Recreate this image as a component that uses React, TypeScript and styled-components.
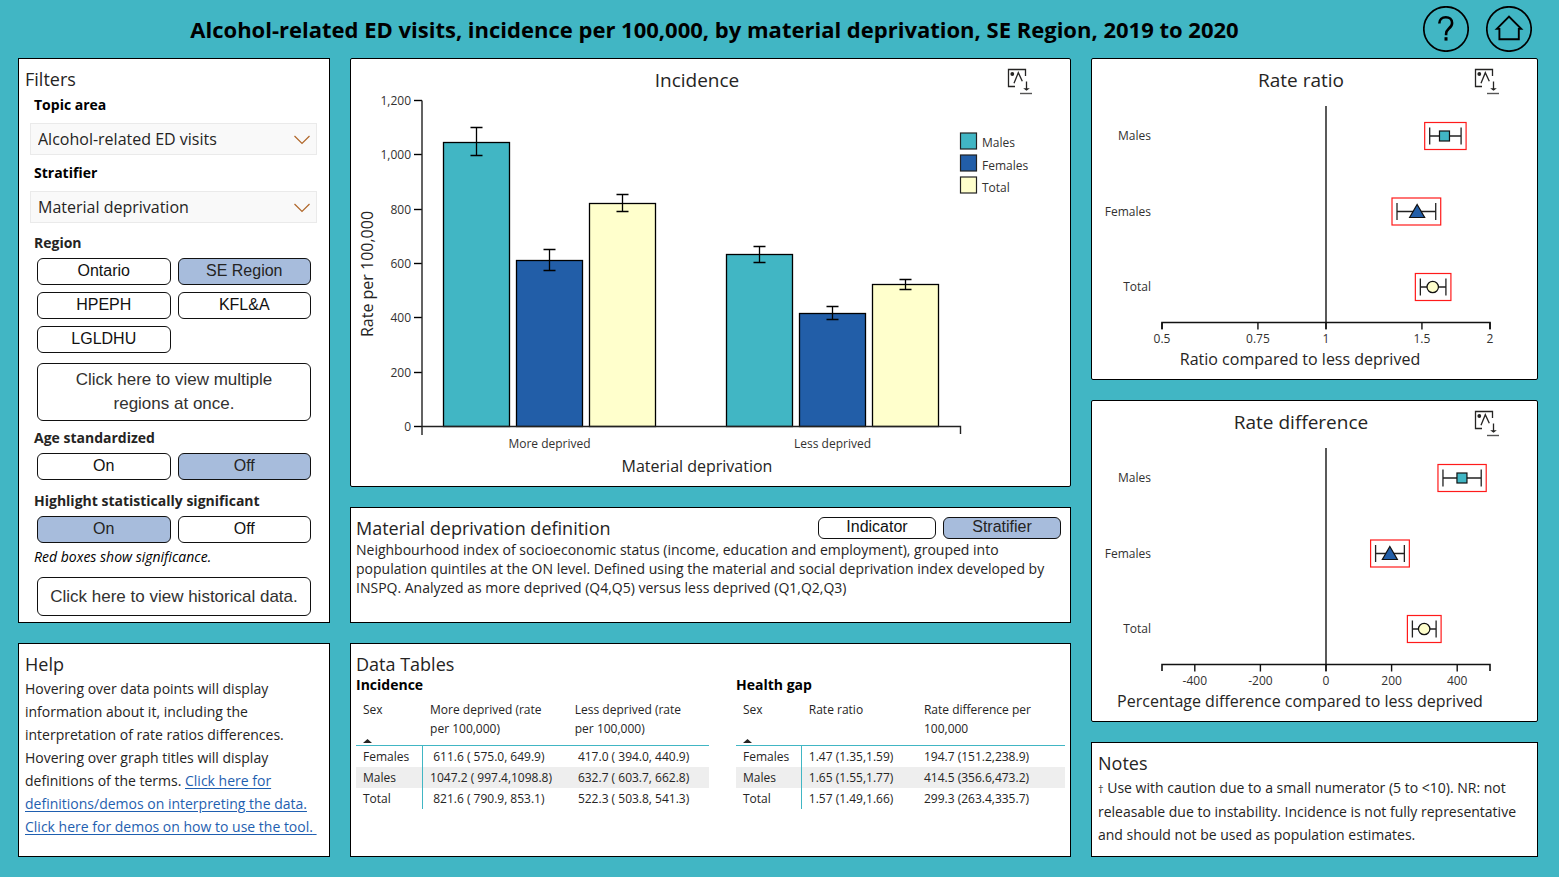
import React, { useState } from "react";
import styled, { createGlobalStyle } from "styled-components";

const TEAL = "#41b6c4";
const BLUE = "#225ea8";
const YELLOW = "#ffffcc";
const UI_FONT = '"Open Sans", "Noto Sans", sans-serif';
const BUTTON_FONT = '"Liberation Sans", Arial, sans-serif';

const GlobalStyle = createGlobalStyle`
  *, *::before, *::after { box-sizing: border-box; }
  body { margin: 0; background: ${TEAL}; color: #252423; font-family: ${UI_FONT}; font-size: 14px; }
  h1, h2, h3, p { margin: 0; }
  button, select { font: inherit; color: inherit; }
`;

/* ---------- page frame ---------- */

const Page = styled.div`
  display: flex;
  flex-direction: column;
  min-height: 100vh;
  padding: 0 21px 20px 18px;
`;

const Header = styled.header`
  display: flex;
  align-items: center;
  height: 58px;
  padding-right: 6px;
`;

const PageTitle = styled.h1`
  flex: 1;
  padding-right: 12px;
  text-align: center;
  font-size: 22px;
  font-weight: 700;
  line-height: 28px;
  color: #000;
`;

const HeaderNav = styled.nav`
  display: flex;
  gap: 17px;
`;

const RoundButton = styled.button`
  display: block;
  width: 46px;
  height: 46px;
  padding: 0;
  border: 0;
  border-radius: 50%;
  background: transparent;
  cursor: pointer;

  svg { display: block; }
`;

const Columns = styled.main`
  flex: 1;
  display: grid;
  grid-template-columns: minmax(0, 312fr) minmax(0, 721fr) minmax(0, 447fr);
  gap: 20px;
`;

const Column = styled.div`
  display: flex;
  flex-direction: column;
  gap: 20px;
`;

const Card = styled.section<{ $grow?: boolean; $rounded?: boolean }>`
  flex: ${(p) => (p.$grow ? "1 0 auto" : "0 0 auto")};
  background: #fff;
  border: 1px solid #000;
  border-radius: ${(p) => (p.$rounded ? "2px" : "0")};
`;

const TextCard = styled(Card)`
  padding: 8px 6px 6px;
`;

const CardTitle = styled.h2`
  font-size: 18px;
  font-weight: 400;
  line-height: 24px;
`;

const BodyText = styled.p<{ $tight?: boolean }>`
  font-size: 14px;
  line-height: ${(p) => (p.$tight ? "19px" : "23px")};
`;

const PaddedText = styled.div`
  padding-top: 1px;

  a { color: #1f5fb0; text-underline-offset: 2px; }
`;

const Dagger = styled.span`
  font-size: 11px;
`;

/* ---------- filters ---------- */

const FilterBody = styled.div`
  display: flex;
  flex-direction: column;
  padding: 4px 6px 0 5px;
`;

const FieldLabel = styled.label`
  display: block;
  margin-left: 4px;
  font-weight: 700;
  font-size: 14px;
  line-height: 20px;
  color: #000;
`;

const GroupLabel = styled.div`
  margin-left: 4px;
  font-weight: 700;
  font-size: 14px;
  line-height: 20px;
`;

const SelectWrap = styled.div`
  position: relative;
  margin: 8px 0;

  svg { position: absolute; right: 7px; top: 12px; pointer-events: none; }
`;

const Select = styled.select`
  display: block;
  width: 100%;
  height: 32px;
  padding: 0 30px 0 7px;
  appearance: none;
  background: #f9f9f9;
  border: 1px solid #eaeaea;
  border-radius: 0;
  font-size: 16px;
`;

const Group = styled.div<{ $top: number }>`
  margin-top: ${(p) => p.$top}px;
  padding-right: 6px;
`;

const ToggleGrid = styled.div`
  display: grid;
  grid-template-columns: 1fr 1fr;
  gap: 7px;
  margin: 5px 0 0 7px;
`;

const Toggle = styled.button<{ $on?: boolean; $small?: boolean }>`
  height: ${(p) => (p.$small ? 22 : 27)}px;
  padding: 0 4px 2px;
  border: 1px solid #111;
  border-radius: 6px;
  background: ${(p) => (p.$on ? "#a7bcdc" : "#fff")};
  color: ${(p) => (p.$on ? "#252423" : "#111")};
  font-family: ${BUTTON_FONT};
  font-size: 16px;
  line-height: 18px;
  cursor: pointer;
`;

const WideButton = styled.button`
  display: block;
  width: calc(100% - 7px);
  min-height: 39px;
  margin: 10px 0 0 7px;
  padding: 4px 10px;
  border: 1px solid #111;
  border-radius: 6px;
  background: #fff;
  color: #323130;
  font-family: ${BUTTON_FONT};
  font-size: 17px;
  line-height: 24px;
  cursor: pointer;
`;

const Hint = styled.p`
  margin: 4px 0 0 4px;
  font-style: italic;
  line-height: 20px;
  color: #000;
`;

/* ---------- definition ---------- */

const DefinitionCard = styled(Card)`
  min-height: 116px;
  padding: 8px 9px 6px 5px;
`;

const DefinitionHead = styled.div`
  display: flex;
  align-items: center;
  justify-content: space-between;
`;

const ToggleRow = styled.div`
  display: grid;
  grid-template-columns: 118px 118px;
  gap: 7px;
`;

/* ---------- tables ---------- */

const TableRow = styled.div`
  display: grid;
  grid-template-columns: minmax(0, 353fr) minmax(0, 329fr);
  gap: 27px;
`;

const TableCard = styled(Card)`
  padding: 8px 5px;
`;

const DataTable = styled.table`
  width: 100%;
  border-collapse: separate;
  border-spacing: 0;
  table-layout: fixed;
  font-size: 12px;

  caption {
    text-align: left;
    font-size: 14px;
    font-weight: 700;
    line-height: 18px;
    color: #000;
  }
  th { text-align: left; font-weight: 400; }
  thead th {
    padding: 6px 12px 2px 7px;
    vertical-align: top;
    line-height: 19px;
    border-bottom: 1px solid ${TEAL};
  }
  thead svg { display: block; margin-top: 20px; }
  tbody th, tbody td {
    height: 21px;
    padding: 0 0 0 7px;
    line-height: 20px;
    white-space: pre;
  }
  tbody th { border-right: 1px solid ${TEAL}; }
  tbody tr:nth-child(even) > * { background: #eeeeee; }
`;

/* ---------- charts ---------- */

const ChartHead = styled.div`
  display: flex;
  align-items: flex-start;
  padding: 8px 37px 0 36px;
`;

const ChartTitle = styled(CardTitle)`
  flex: 1;
  text-align: center;
  font-size: 19px;
  line-height: 26px;
`;

const IconButton = styled.button`
  width: 26px;
  height: 26px;
  padding: 0;
  border: 0;
  background: none;
  cursor: pointer;

  svg { display: block; }
`;

const Plot = styled.svg`
  display: block;
  width: 100%;
  height: auto;
  font-family: ${UI_FONT};

  .tick { font-size: 12px; fill: #323130; }
  .axis { font-size: 16px; fill: #252423; }
`;

function DownloadIcon() {
  return (
    <svg width="26" height="28" viewBox="0 0 26 28" fill="none" stroke="#252423" strokeWidth="1.3">
      <path d="M18.5 9V2.5H1.5V19.5H8" />
      <circle cx="5.3" cy="7" r="1.9" fill="#252423" stroke="none" />
      <path d="M7 16.3 11.3 5.7 15.3 14.3" />
      <path d="M19.5 14.5v8.5" />
      <path d="M16.2 21.2h6.6l-3.3 2.6z" fill="#252423" stroke="none" />
      <path d="M13 26.5h12" strokeWidth="1.4" stroke="#555" />
    </svg>
  );
}

function Chevron() {
  return (
    <svg width="16" height="10" viewBox="0 0 16 10" fill="none" stroke="#b0672a" strokeWidth="1.2">
      <path d="M.5 1 8 8.5 15.5 1" />
    </svg>
  );
}

type Sex = "Females" | "Males" | "Total";
const FILL: Record<Sex, string> = { Males: TEAL, Females: BLUE, Total: YELLOW };
const ORDER: Sex[] = ["Males", "Females", "Total"];

const INCIDENCE: { label: string; left: number; values: Record<Sex, [number, number, number]> }[] = [
  {
    label: "More deprived",
    left: 92.5,
    values: { Males: [1047.2, 997.4, 1098.8], Females: [611.6, 575, 649.9], Total: [821.6, 790.9, 853.1] },
  },
  {
    label: "Less deprived",
    left: 375.5,
    values: { Males: [632.7, 603.7, 662.8], Females: [417, 394, 440.9], Total: [522.3, 503.8, 541.3] },
  },
];

function ChartHeader({ title }: { title: string }) {
  return (
    <ChartHead>
      <ChartTitle>{title}</ChartTitle>
      <IconButton type="button" aria-label={`Download ${title} chart`}>
        <DownloadIcon />
      </IconButton>
    </ChartHead>
  );
}

function IncidenceChart() {
  const base = 333.5;
  const y = (v: number) => base - Math.round((v * 326) / 1200);
  const bar = 66;
  const step = 73;
  return (
    <Plot viewBox="0 0 719 393" role="img" aria-label="Incidence by material deprivation">
      {[0, 200, 400, 600, 800, 1000, 1200].map((t) => (
        <g key={t}>
          <path d={`M63 ${y(t)}H71`} stroke="#000" strokeWidth="1.4" />
          <text className="tick" x="60" y={y(t) + 4.5} textAnchor="end">
            {t.toLocaleString("en-US")}
          </text>
        </g>
      ))}
      {INCIDENCE.map((group) => (
        <g key={group.label}>
          {ORDER.map((sex, i) => {
            const [v, lo, hi] = group.values[sex];
            const x = group.left + i * step;
            const mid = x + bar / 2;
            return (
              <g key={sex} stroke="#000" strokeWidth="1.3">
                <rect x={x} y={y(v)} width={bar} height={base - y(v)} fill={FILL[sex]} />
                <path d={`M${mid} ${y(hi)}V${y(lo)}M${mid - 6} ${y(hi)}h12M${mid - 6} ${y(lo)}h12`} fill="none" />
              </g>
            );
          })}
          <text className="tick" x={group.left + step + bar / 2} y="355" textAnchor="middle">
            {group.label}
          </text>
        </g>
      ))}
      <path d={`M71 ${y(1200)}V342M71 ${base}H609.5V341`} fill="none" stroke="#222" strokeWidth="1.4" />
      <text className="axis" x="346" y="379" textAnchor="middle">
        Material deprivation
      </text>
      <text className="axis" transform="translate(22 181) rotate(-90)" textAnchor="middle">
        Rate per 100,000
      </text>
      {ORDER.map((sex, i) => (
        <g key={sex}>
          <rect x="609.5" y={40 + i * 22} width="16" height="16" fill={FILL[sex]} stroke="#222" strokeWidth="1.2" />
          <text className="tick" x="631" y={54 + i * 22.5}>
            {sex}
          </text>
        </g>
      ))}
    </Plot>
  );
}

function Marker({ sex, x, y }: { sex: Sex; x: number; y: number }) {
  const paint = { fill: FILL[sex], stroke: "#111", strokeWidth: 1.2 };
  if (sex === "Males") return <rect x={x - 5} y={y - 5} width="10" height="10" {...paint} />;
  if (sex === "Females") return <path d={`M${x} ${y - 7}L${x + 7.5} ${y + 6}H${x - 7.5}Z`} {...paint} />;
  return <circle cx={x} cy={y} r="5.7" {...paint} />;
}

interface ForestProps {
  label: string;
  highlight: boolean;
  scale: (v: number) => number;
  ticks: number[];
  reference: number;
  rows: Record<Sex, [number, number, number]>;
}

function ForestPlot({ label, highlight, scale, ticks, reference, rows }: ForestProps) {
  return (
    <Plot viewBox="0 0 445 286" role="img" aria-label={label}>
      <path d={`M${scale(reference)} 13V236`} stroke="#000" strokeWidth="1.3" />
      <path d="M70 236V229.5H398V236" fill="none" stroke="#111" strokeWidth="1.6" />
      {ticks.map((t) => (
        <g key={t}>
          <path d={`M${scale(t)} 229.5V236.5`} stroke="#111" strokeWidth="1.4" />
          <text className="tick" x={scale(t)} y="250" textAnchor="middle">
            {t}
          </text>
        </g>
      ))}
      {ORDER.map((sex, i) => {
        const [v, lo, hi] = rows[sex];
        const y = 43 + i * 75.5;
        const a = scale(lo);
        const b = scale(hi);
        return (
          <g key={sex}>
            <text className="tick" x="59" y={y + 4} textAnchor="end">
              {sex}
            </text>
            {highlight && (
              <rect x={a - 5} y={y - 13.5} width={b - a + 10} height="27" fill="none" stroke="#ff1a1a" strokeWidth="1.2" />
            )}
            <path d={`M${a} ${y}H${b}M${a} ${y - 8.5}v17M${b} ${y - 8.5}v17`} stroke="#222" strokeWidth="1.3" />
            <Marker sex={sex} x={scale(v)} y={y} />
          </g>
        );
      })}
      <text className="axis" x="208" y="272" textAnchor="middle">
        {label}
      </text>
    </Plot>
  );
}

interface TableProps {
  caption: string;
  widths: number[];
  heads: string[];
  rows: string[][];
}

function ResultTable({ caption, widths, heads, rows }: TableProps) {
  return (
    <DataTable>
      <caption>{caption}</caption>
      <colgroup>
        {widths.map((w, i) => (
          <col key={i} style={{ width: `${w}%` }} />
        ))}
      </colgroup>
      <thead>
        <tr>
          <th scope="col" aria-sort="ascending">
            Sex
            <svg width="9" height="4" viewBox="0 0 9 4" aria-hidden="true">
              <path d="M0 4 4.5 0 9 4Z" fill="#252423" />
            </svg>
          </th>
          {heads.map((h) => (
            <th scope="col" key={h}>
              {h}
            </th>
          ))}
        </tr>
      </thead>
      <tbody>
        {rows.map(([name, ...cells]) => (
          <tr key={name}>
            <th scope="row">{name}</th>
            {cells.map((c) => (
              <td key={c}>{c}</td>
            ))}
          </tr>
        ))}
      </tbody>
    </DataTable>
  );
}

interface ToggleSetProps {
  label: string;
  options: string[];
  value: string;
  onChange: (v: string) => void;
}

function ToggleSet({ label, options, value, onChange }: ToggleSetProps) {
  return (
    <ToggleGrid role="group" aria-label={label}>
      {options.map((o) => (
        <Toggle key={o} type="button" $on={o === value} aria-pressed={o === value} onClick={() => onChange(o)}>
          {o}
        </Toggle>
      ))}
    </ToggleGrid>
  );
}

export default function App() {
  const [region, setRegion] = useState("SE Region");
  const [age, setAge] = useState("Off");
  const [highlight, setHighlight] = useState("On");
  const [definition, setDefinition] = useState("Stratifier");

  return (
    <>
      <GlobalStyle />
      <Page>
        <Header>
          <PageTitle>
            Alcohol-related ED visits, incidence per 100,000, by material deprivation, SE Region, 2019 to 2020
          </PageTitle>
          <HeaderNav aria-label="Page">
            <RoundButton type="button" aria-label="Help">
              <svg width="46" height="46" viewBox="0 0 46 46" fill="none" stroke="#000">
                <circle cx="23" cy="23" r="22.2" strokeWidth="1.7" />
                <path d="M16.3 17.6C16.3 13.5 19 11.2 22.8 11.2c3.7 0 6.3 2.2 6.3 5.7 0 2.8-1.5 4.3-3.4 5.9-1.8 1.6-2.6 2.9-2.6 5.2v1.2" strokeWidth="2.6" />
                <path d="M23 31.2v3.4" strokeWidth="3" />
              </svg>
            </RoundButton>
            <RoundButton type="button" aria-label="Home">
              <svg width="46" height="46" viewBox="0 0 46 46" fill="none" stroke="#000">
                <circle cx="23" cy="23" r="22.2" strokeWidth="1.7" />
                <path d="M10.8 22.9 23 10.7 35.2 22.9H32.8V33.2H13.4V22.9Z" strokeWidth="1.9" />
              </svg>
            </RoundButton>
          </HeaderNav>
        </Header>

        <Columns>
          <Column>
            <TextCard>
              <CardTitle>Filters</CardTitle>
              <FilterBody>
                <FieldLabel htmlFor="topic">Topic area</FieldLabel>
                <SelectWrap>
                  <Select id="topic" defaultValue="Alcohol-related ED visits">
                    <option>Alcohol-related ED visits</option>
                  </Select>
                  <Chevron />
                </SelectWrap>
                <FieldLabel htmlFor="stratifier">Stratifier</FieldLabel>
                <SelectWrap>
                  <Select id="stratifier" defaultValue="Material deprivation">
                    <option>Material deprivation</option>
                  </Select>
                  <Chevron />
                </SelectWrap>
                <Group $top={2}>
                  <GroupLabel>Region</GroupLabel>
                  <ToggleSet
                    label="Region"
                    options={["Ontario", "SE Region", "HPEPH", "KFL&A", "LGLDHU"]}
                    value={region}
                    onChange={setRegion}
                  />
                  <WideButton type="button">Click here to view multiple regions at once.</WideButton>
                </Group>
                <Group $top={7}>
                  <GroupLabel>Age standardized</GroupLabel>
                  <ToggleSet label="Age standardized" options={["On", "Off"]} value={age} onChange={setAge} />
                </Group>
                <Group $top={11}>
                  <GroupLabel>Highlight statistically significant</GroupLabel>
                  <ToggleSet
                    label="Highlight statistically significant"
                    options={["On", "Off"]}
                    value={highlight}
                    onChange={setHighlight}
                  />
                  <Hint>Red boxes show significance.</Hint>
                  <WideButton type="button">Click here to view historical data.</WideButton>
                </Group>
              </FilterBody>
            </TextCard>

            <TextCard $grow>
              <CardTitle>Help</CardTitle>
              <PaddedText>
                <BodyText>
                  Hovering over data points will display information about it, including the interpretation of rate
                  ratios differences.
                </BodyText>
                <BodyText>
                  Hovering over graph titles will display definitions of the terms.{" "}
                  <a href="#definitions">Click here for definitions/demos on interpreting the data.</a>
                </BodyText>
                <BodyText>
                  <a href="#demos">Click here for demos on how to use the tool.{"\u00a0"}</a>
                </BodyText>
              </PaddedText>
            </TextCard>
          </Column>

          <Column>
            <Card $rounded>
              <ChartHeader title="Incidence" />
              <IncidenceChart />
            </Card>

            <DefinitionCard>
              <DefinitionHead>
                <CardTitle>Material deprivation definition</CardTitle>
                <ToggleRow role="group" aria-label="Definition shown">
                  {["Indicator", "Stratifier"].map((o) => (
                    <Toggle
                      key={o}
                      type="button"
                      $small
                      $on={o === definition}
                      aria-pressed={o === definition}
                      onClick={() => setDefinition(o)}
                    >
                      {o}
                    </Toggle>
                  ))}
                </ToggleRow>
              </DefinitionHead>
              <BodyText $tight>
                Neighbourhood index of socioeconomic status (income, education and employment), grouped into population
                quintiles at the ON level. Defined using the material and social deprivation index developed by INSPQ.
                Analyzed as more deprived (Q4,Q5) versus less deprived (Q1,Q2,Q3)
              </BodyText>
            </DefinitionCard>

            <TableCard $grow>
              <CardTitle>Data Tables</CardTitle>
              <TableRow>
                <ResultTable
                  caption="Incidence"
                  widths={[19, 41, 40]}
                  heads={["More deprived (rate per 100,000)", "Less deprived (rate per 100,000)"]}
                  rows={[
                    ["Females", " 611.6 ( 575.0, 649.9)", " 417.0 ( 394.0, 440.9)"],
                    ["Males", "1047.2 ( 997.4,1098.8)", " 632.7 ( 603.7, 662.8)"],
                    ["Total", " 821.6 ( 790.9, 853.1)", " 522.3 ( 503.8, 541.3)"],
                  ]}
                />
                <ResultTable
                  caption="Health gap"
                  widths={[20, 35, 45]}
                  heads={["Rate ratio", "Rate difference per 100,000"]}
                  rows={[
                    ["Females", "1.47 (1.35,1.59)", "194.7 (151.2,238.9)"],
                    ["Males", "1.65 (1.55,1.77)", "414.5 (356.6,473.2)"],
                    ["Total", "1.57 (1.49,1.66)", "299.3 (263.4,335.7)"],
                  ]}
                />
              </TableRow>
            </TableCard>
          </Column>

          <Column>
            <Card $rounded>
              <ChartHeader title="Rate ratio" />
              <ForestPlot
                label="Ratio compared to less deprived"
                highlight={highlight === "On"}
                scale={(v) => 234 + Math.log2(v) * 164}
                ticks={[0.5, 0.75, 1, 1.5, 2]}
                reference={1}
                rows={{ Males: [1.65, 1.55, 1.77], Females: [1.47, 1.35, 1.59], Total: [1.57, 1.49, 1.66] }}
              />
            </Card>
            <Card $rounded>
              <ChartHeader title="Rate difference" />
              <ForestPlot
                label="Percentage difference compared to less deprived"
                highlight={highlight === "On"}
                scale={(v) => 234 + v * 0.328}
                ticks={[-400, -200, 0, 200, 400]}
                reference={0}
                rows={{ Males: [414.5, 356.6, 473.2], Females: [194.7, 151.2, 238.9], Total: [299.3, 263.4, 335.7] }}
              />
            </Card>
            <TextCard $grow>
              <CardTitle>Notes</CardTitle>
              <PaddedText>
                <BodyText>
                  <Dagger>†</Dagger> Use with caution due to a small numerator (5 to &lt;10). NR: not releasable due to
                  instability. Incidence is not fully representative and should not be used as population estimates.
                </BodyText>
              </PaddedText>
            </TextCard>
          </Column>
        </Columns>
      </Page>
    </>
  );
}
